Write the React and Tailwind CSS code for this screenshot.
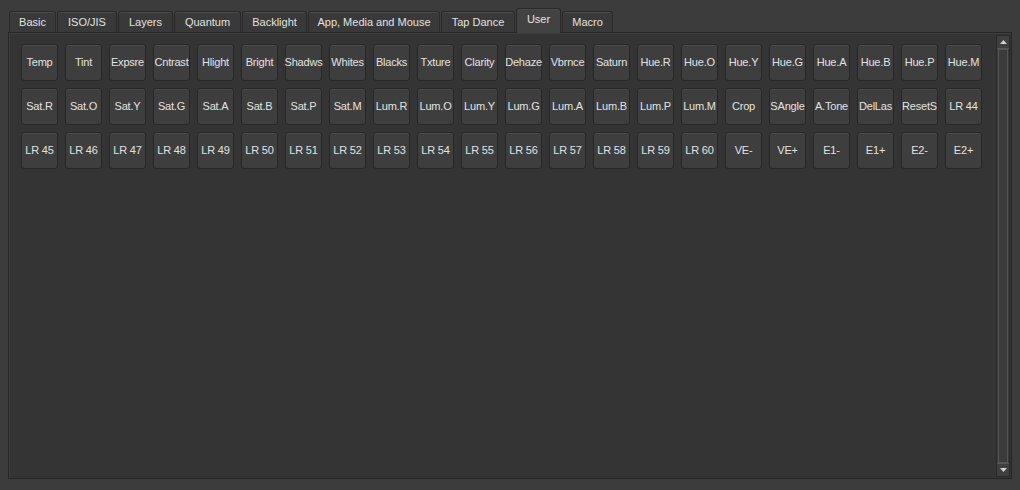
import React from "react";

const tabs = [
  ["Basic", "w-[47px]"],
  ["ISO/JIS", "w-[60px]"],
  ["Layers", "w-[55px]"],
  ["Quantum", "w-[67px]"],
  ["Backlight", "w-[65px]"],
  ["App, Media and Mouse", "w-[132px]"],
  ["Tap Dance", "w-[74px]"],
  ["User", "w-[45px]"],
  ["Macro", "w-[51px]"],
];

const keys = [
  "Temp","Tint","Expsre","Cntrast","Hlight","Bright","Shadws","Whites","Blacks","Txture","Clarity","Dehaze","Vbrnce","Saturn","Hue.R","Hue.O","Hue.Y","Hue.G","Hue.A","Hue.B","Hue.P","Hue.M",
  "Sat.R","Sat.O","Sat.Y","Sat.G","Sat.A","Sat.B","Sat.P","Sat.M","Lum.R","Lum.O","Lum.Y","Lum.G","Lum.A","Lum.B","Lum.P","Lum.M","Crop","SAngle","A.Tone","DelLas","ResetS","LR 44",
  "LR 45","LR 46","LR 47","LR 48","LR 49","LR 50","LR 51","LR 52","LR 53","LR 54","LR 55","LR 56","LR 57","LR 58","LR 59","LR 60","VE-","VE+","E1-","E1+","E2-","E2+",
];

export default function App() {
  return (
    <div
      className="w-[1020px] h-[490px] bg-[#3c3c3c] pt-[8px] pl-[8px] overflow-hidden text-[11px] text-[#e2e2e2]"
      style={{ fontFamily: '"Liberation Sans", Arial, sans-serif' }}
    >
      <div className="flex items-end gap-[1px] pl-[1px] h-[24px]">
        {tabs.map(([t, w]) => {
          const sel = t === "User";
          return (
            <div
              key={t}
              className={`${w} ${
                sel
                  ? "h-[25px] bg-[#424242] -mb-[1px] relative z-10 pb-[3px]"
                  : "h-[21px] bg-[#393939]"
              } flex items-center justify-center border border-b-0 border-[#2a2a2a] rounded-t-[3px] shadow-[inset_0_1px_0_#4a4a4a]`}
            >
              {t}
            </div>
          );
        })}
      </div>
      <div className="w-[1004px] h-[447px] bg-[#343434] border border-[#262626] shadow-[inset_1px_1px_0_#3e3e3e] flex">
        <div className="flex-1 pl-[12px] pt-[11px]">
          <div className="grid grid-cols-[repeat(22,37px)] gap-[7px]">
            {keys.map((k) => (
              <div
                key={k}
                className="h-[37px] flex items-center justify-center rounded-[3px] border border-[#272727] bg-[#3e3e3e] shadow-[inset_0_1px_0_#4a4a4a] whitespace-nowrap tracking-[-0.2px]"
              >
                {k}
              </div>
            ))}
          </div>
        </div>
        <div className="w-[14px] mt-[2px] mb-[1px] mr-[1px] flex flex-col border border-[#2a2a2a] bg-[#3a3a3a]">
          <div className="h-[13px] border-b border-[#555] bg-[#3f3f3f] flex items-center justify-center">
            <svg width="7" height="4" viewBox="0 0 7 4"><path d="M3.5 0L7 4H0z" fill="#d0d0d0" /></svg>
          </div>
          <div className="flex-1 mx-[1px] border border-[#555] bg-[#3b3b3b]" />
          <div className="h-[13px] border-t border-[#555] bg-[#3f3f3f] flex items-center justify-center">
            <svg width="7" height="4" viewBox="0 0 7 4"><path d="M0 0H7L3.5 4z" fill="#d0d0d0" /></svg>
          </div>
        </div>
      </div>
    </div>
  );
}
